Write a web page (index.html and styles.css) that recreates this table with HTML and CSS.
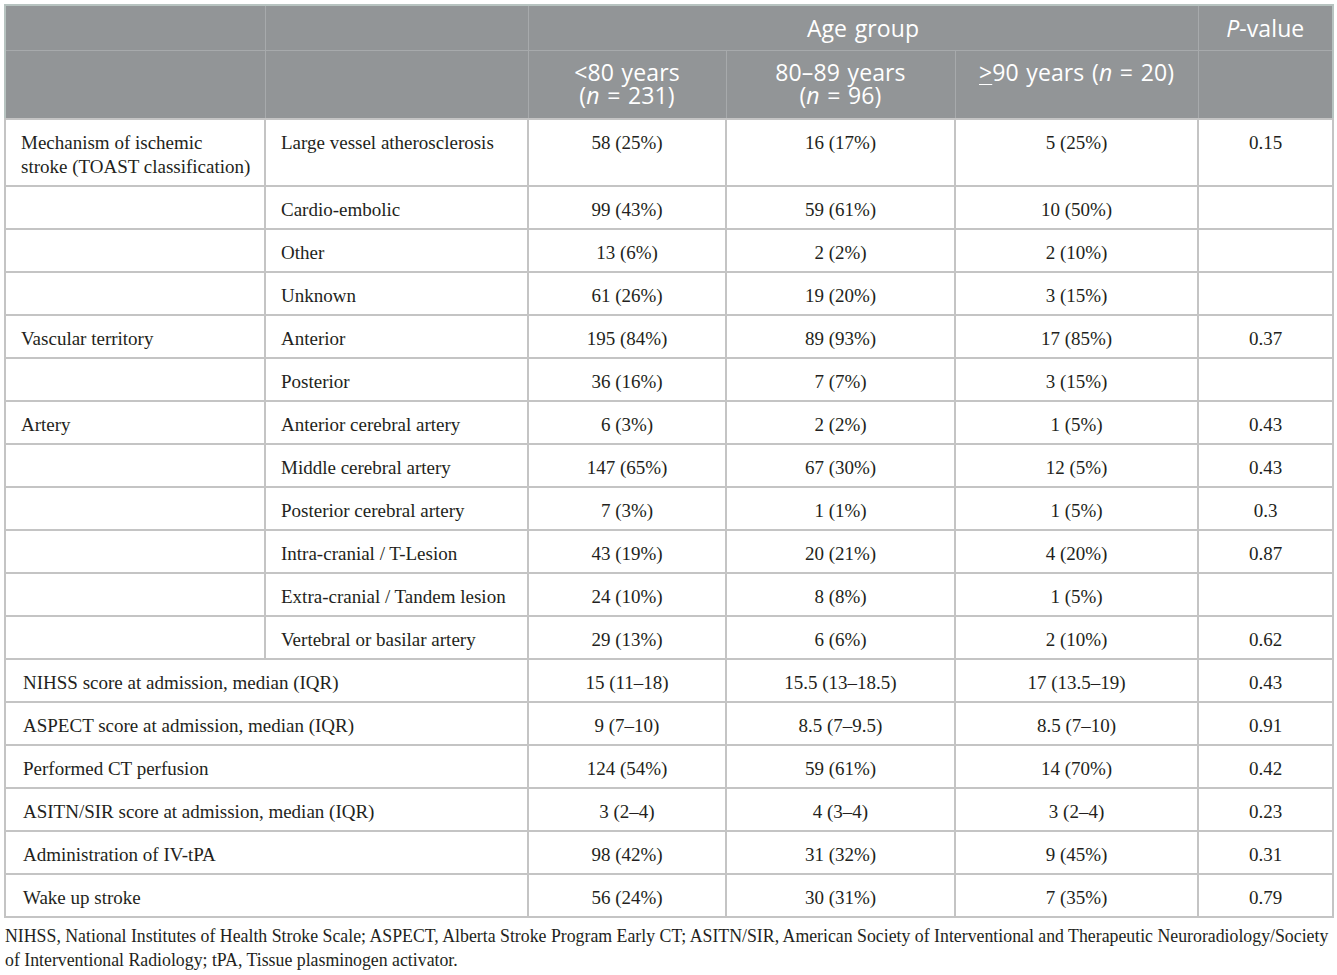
FILE: index.html
```html
<!DOCTYPE html>
<html lang="en">
<head>
  <meta charset="UTF-8" />
  <title>Age group table</title>
  <link rel="stylesheet" href="styles.css">
</head>
<body>
  <table class="data-table">
    <colgroup>
      <col class="c-group">
      <col class="c-sub">
      <col class="c-age1">
      <col class="c-age2">
      <col class="c-age3">
      <col class="c-p">
    </colgroup>
    <thead>
      <tr class="head-top">
        <th></th>
        <th></th>
        <th colspan="3">Age group</th>
        <th><i>P</i>-value</th>
      </tr>
      <tr>
        <th></th>
        <th></th>
        <th>&lt;80 years<br>(<i>n</i> = 231)</th>
        <th>80–89 years<br>(<i>n</i> = 96)</th>
        <th><u>&gt;</u>90 years (<i>n</i> = 20)</th>
        <th></th>
      </tr>
    </thead>
    <tbody>
      <tr>
        <td class="label">Mechanism of ischemic<br>stroke (TOAST classification)</td>
        <td class="label">Large vessel atherosclerosis</td>
        <td>58 (25%)</td><td>16 (17%)</td><td>5 (25%)</td><td>0.15</td>
      </tr>
      <tr>
        <td></td><td class="label">Cardio-embolic</td>
        <td>99 (43%)</td><td>59 (61%)</td><td>10 (50%)</td><td></td>
      </tr>
      <tr>
        <td></td><td class="label">Other</td>
        <td>13 (6%)</td><td>2 (2%)</td><td>2 (10%)</td><td></td>
      </tr>
      <tr>
        <td></td><td class="label">Unknown</td>
        <td>61 (26%)</td><td>19 (20%)</td><td>3 (15%)</td><td></td>
      </tr>
      <tr>
        <td class="label">Vascular territory</td><td class="label">Anterior</td>
        <td>195 (84%)</td><td>89 (93%)</td><td>17 (85%)</td><td>0.37</td>
      </tr>
      <tr>
        <td></td><td class="label">Posterior</td>
        <td>36 (16%)</td><td>7 (7%)</td><td>3 (15%)</td><td></td>
      </tr>
      <tr>
        <td class="label">Artery</td><td class="label">Anterior cerebral artery</td>
        <td>6 (3%)</td><td>2 (2%)</td><td>1 (5%)</td><td>0.43</td>
      </tr>
      <tr>
        <td></td><td class="label">Middle cerebral artery</td>
        <td>147 (65%)</td><td>67 (30%)</td><td>12 (5%)</td><td>0.43</td>
      </tr>
      <tr>
        <td></td><td class="label">Posterior cerebral artery</td>
        <td>7 (3%)</td><td>1 (1%)</td><td>1 (5%)</td><td>0.3</td>
      </tr>
      <tr>
        <td></td><td class="label">Intra-cranial / T-Lesion</td>
        <td>43 (19%)</td><td>20 (21%)</td><td>4 (20%)</td><td>0.87</td>
      </tr>
      <tr>
        <td></td><td class="label">Extra-cranial / Tandem lesion</td>
        <td>24 (10%)</td><td>8 (8%)</td><td>1 (5%)</td><td></td>
      </tr>
      <tr>
        <td></td><td class="label">Vertebral or basilar artery</td>
        <td>29 (13%)</td><td>6 (6%)</td><td>2 (10%)</td><td>0.62</td>
      </tr>
      <tr>
        <td class="label wide" colspan="2">NIHSS score at admission, median (IQR)</td>
        <td>15 (11–18)</td><td>15.5 (13–18.5)</td><td>17 (13.5–19)</td><td>0.43</td>
      </tr>
      <tr>
        <td class="label wide" colspan="2">ASPECT score at admission, median (IQR)</td>
        <td>9 (7–10)</td><td>8.5 (7–9.5)</td><td>8.5 (7–10)</td><td>0.91</td>
      </tr>
      <tr>
        <td class="label wide" colspan="2">Performed CT perfusion</td>
        <td>124 (54%)</td><td>59 (61%)</td><td>14 (70%)</td><td>0.42</td>
      </tr>
      <tr>
        <td class="label wide" colspan="2">ASITN/SIR score at admission, median (IQR)</td>
        <td>3 (2–4)</td><td>4 (3–4)</td><td>3 (2–4)</td><td>0.23</td>
      </tr>
      <tr>
        <td class="label wide" colspan="2">Administration of IV-tPA</td>
        <td>98 (42%)</td><td>31 (32%)</td><td>9 (45%)</td><td>0.31</td>
      </tr>
      <tr>
        <td class="label wide" colspan="2">Wake up stroke</td>
        <td>56 (24%)</td><td>30 (31%)</td><td>7 (35%)</td><td>0.79</td>
      </tr>
    </tbody>
  </table>

  <p class="footnote">NIHSS, National Institutes of Health Stroke Scale; ASPECT, Alberta Stroke Program Early CT; ASITN/SIR, American Society of Interventional and Therapeutic Neuroradiology/Society of Interventional Radiology; tPA, Tissue plasminogen activator.</p>
</body>
</html>
```

FILE: styles.css
```css
body {
  margin: 0;
  padding: 4px 4px 0 4px;
  background-color: #ffffff;
  font-family: "Liberation Serif", "Times New Roman", serif;
  color: #231f20;
}

.data-table {
  width: 1328px;
  table-layout: fixed;
  border-collapse: collapse;
  border: 2px solid #b7c3c0;
}

.c-group { width: 260px; }
.c-sub   { width: 263px; }
.c-age1  { width: 198px; }
.c-age2  { width: 229px; }
.c-age3  { width: 243px; }
.c-p     { width: 135px; }

.data-table th {
  background-color: #929597;
  color: #ffffff;
  font-family: "Open Sans", "Liberation Sans", sans-serif;
  font-weight: normal;
  font-size: 23px;
  line-height: 23px;
  letter-spacing: 0.1px;
  word-spacing: 1.5px;
  padding: 10px 6px 11px 6px;
  border: 1px solid #a7aaac;
  text-align: center;
  vertical-align: top;
  white-space: nowrap;
}

.data-table th u {
  text-decoration-thickness: 1px;
  text-underline-offset: 3px;
}

.data-table .head-top th {
  padding-top: 11px;
  padding-bottom: 10px;
}

.data-table td {
  font-size: 19px;
  line-height: 24px;
  padding: 11px 8px 6px 8px;
  border: 2px solid #c4c4c4;
  text-align: center;
  vertical-align: top;
}

.data-table td.label {
  text-align: left;
  padding-left: 15px;
}

.data-table td.label.wide {
  padding-left: 17px;
}

.footnote {
  margin: 6px 0 0 1px;
  font-size: 17.8px;
  line-height: 24px;
  color: #231f20;
  width: 1329px;
}
```
